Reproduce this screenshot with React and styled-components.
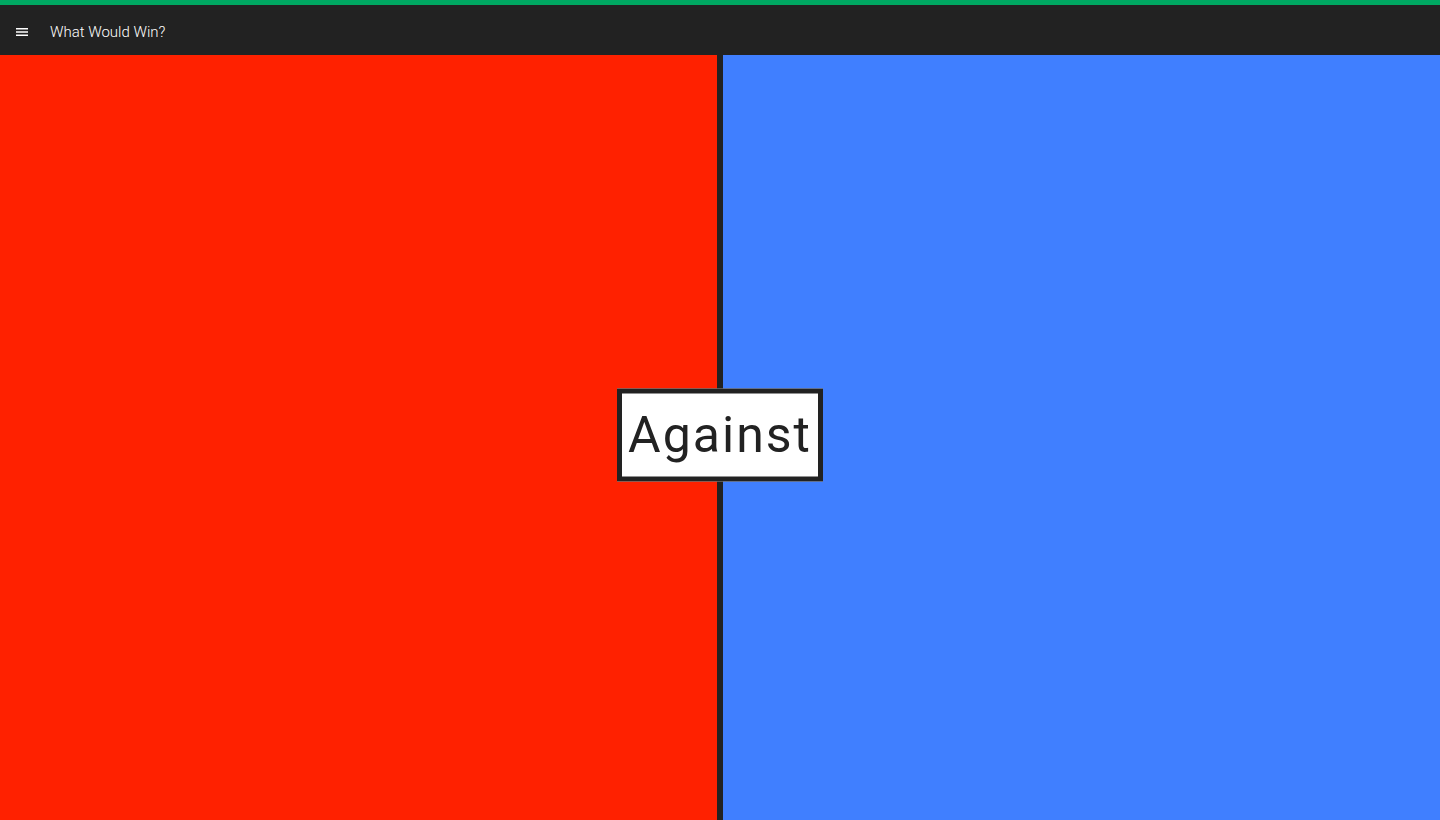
import React from "react"
import styled, {createGlobalStyle} from "styled-components"

const GlobalStyles = createGlobalStyle`
  html, body {
    margin: 0;
    padding: 0;
    height: 100%;
    overflow: hidden;
    font-family: Roboto, "Liberation Sans", sans-serif;
    background: #222222;
  }
`

const Accent = styled.div`
  height: 5px;
  background-color: #00a862;
`

const Toolbar = styled.header`
  height: 50px;
  display: flex;
  align-items: center;
  background-color: #222222;
  color: #ffffff;
`

const MenuButton = styled.button`
  width: 46px;
  height: 50px;
  padding: 3px 0 0 16px;
  border: none;
  background: none;
  display: flex;
  align-items: center;
  cursor: pointer;
`

const Title = styled.h1`
  margin: 4px 0 0 4px;
  font-size: 15px;
  font-weight: 300;
  color: #ffffff;
`

const Arena = styled.main`
  position: relative;
  display: flex;
  height: calc(100vh - 55px);
`

const Side = styled.section`
  flex: 1;
  background-color: ${p => p.$color};
`

const Divider = styled.div`
  width: 6px;
  background-color: #222222;
`

const Versus = styled.div`
  position: absolute;
  left: 50%;
  top: 50%;
  transform: translate(-50%, calc(-50% - 3px));
  box-sizing: border-box;
  width: 206px;
  height: 93px;
  border: 5px solid #222222;
  background: #ffffff;
  display: flex;
  align-items: center;
  justify-content: center;
  font-size: 50px;
  letter-spacing: 2px;
  color: #222222;
`

function MenuIcon() {
  return (
    <svg width="12" height="8" viewBox="0 0 12 8">
      <rect x="0" y="0" width="12" height="1.5" fill="#ffffff" />
      <rect x="0" y="3.25" width="12" height="1.5" fill="#ffffff" />
      <rect x="0" y="6.5" width="12" height="1.5" fill="#ffffff" />
    </svg>
  )
}

export default function App() {
  return (
    <>
      <GlobalStyles />
      <Accent />
      <Toolbar>
        <MenuButton aria-label="menu">
          <MenuIcon />
        </MenuButton>
        <Title>What Would Win?</Title>
      </Toolbar>
      <Arena>
        <Side $color="#ff2100" />
        <Divider />
        <Side $color="#407fff" />
        <Versus>Against</Versus>
      </Arena>
    </>
  )
}
